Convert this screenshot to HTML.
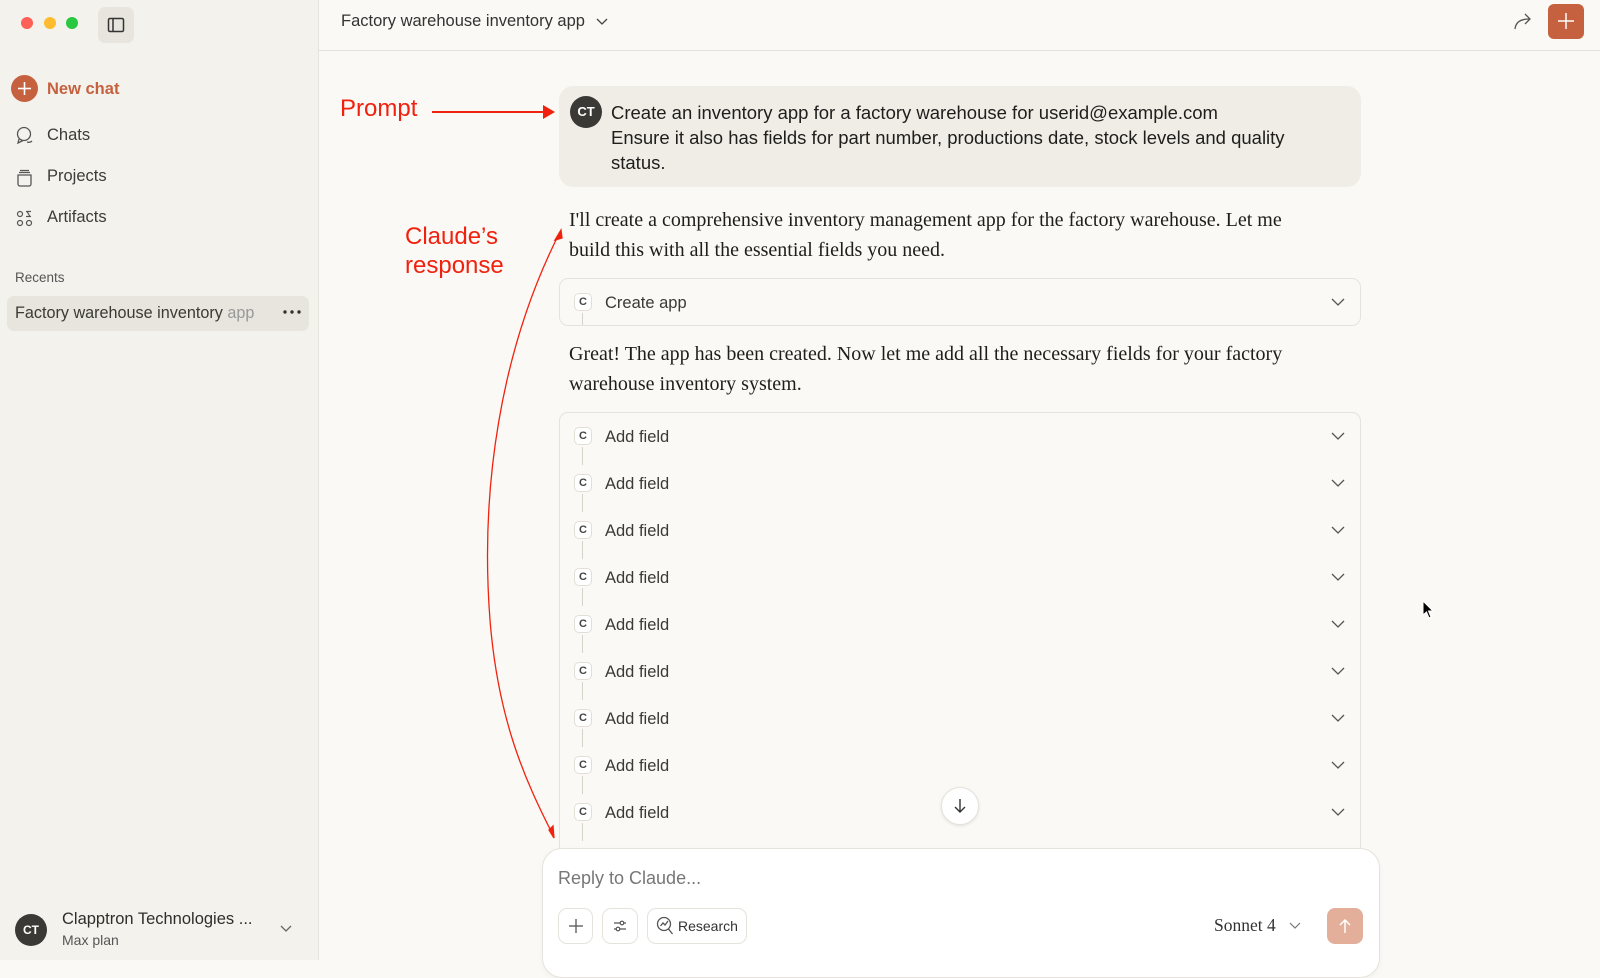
<!DOCTYPE html>
<html><head><style>
*{margin:0;padding:0;box-sizing:border-box}
body{width:1600px;height:960px;overflow:hidden;background:#faf9f5;font-family:"Liberation Sans",sans-serif;color:#2b2a27;position:relative}
.a{position:absolute}
.side{left:0;top:0;width:319px;height:960px;background:#f4f2ec;border-right:1px solid #e6e3dc}
.nav{font-size:16.5px;color:#3d3c38}
.serif{font-family:"Liberation Serif",serif}
.row{position:absolute;left:560px;width:801px;height:47px}
.cicon{position:absolute;left:14px;top:15px;width:18px;height:18px;border:1px solid #e2dfd7;border-radius:5px;background:#fff;font-size:11px;font-weight:bold;text-align:center;line-height:16px;color:#444}
.vline{position:absolute;left:22px;top:35px;width:1px;height:18px;background:#d6d3cb}
.lbl{position:absolute;left:45px;top:16px;font-size:16.5px;color:#3a3935}
.chev{position:absolute;right:16px;top:19px}
.btn{position:absolute;top:908px;height:36px;border:1px solid #e6e3dc;border-radius:9px;background:#fff}
</style></head><body>
<div class="a side">
  <div class="a" style="left:21px;top:17px;width:12px;height:12px;border-radius:50%;background:#fe5f57"></div>
  <div class="a" style="left:44px;top:17px;width:12px;height:12px;border-radius:50%;background:#febc2e"></div>
  <div class="a" style="left:66px;top:17px;width:12px;height:12px;border-radius:50%;background:#28c840"></div>
  <div class="a" style="left:98px;top:7px;width:36px;height:36px;border-radius:7px;background:#e8e5de"></div>
  <svg class="a" style="left:106px;top:15px" width="20" height="20" viewBox="0 0 20 20" fill="none" stroke="#333" stroke-width="1.5"><rect x="2.5" y="3.5" width="15" height="13" rx="1.5"/><line x1="7" y1="4" x2="7" y2="16"/></svg>
  <div class="a" style="left:11px;top:75px;width:27px;height:27px;border-radius:50%;background:#c6613f"></div>
  <svg class="a" style="left:17px;top:81px" width="15" height="15" stroke="#fff" stroke-width="1.6"><line x1="7.5" y1="1" x2="7.5" y2="14"/><line x1="1" y1="7.5" x2="14" y2="7.5"/></svg>
  <div class="a" style="left:47px;top:80px;font-size:16.5px;font-weight:bold;color:#c6613f">New chat</div>
  <svg class="a" style="left:15px;top:126px" width="20" height="20" fill="none" stroke="#555" stroke-width="1.3"><circle cx="9" cy="8" r="6.5"/><path d="M4 13 L3 17 L8 14.5 M12 16 Q15 17 17 15"/></svg>
  <div class="a nav" style="left:47px;top:126px">Chats</div>
  <svg class="a" style="left:15px;top:168px" width="20" height="20" fill="none" stroke="#555" stroke-width="1.3"><path d="M3 7h13v9a2 2 0 0 1-2 2H5a2 2 0 0 1-2-2z M4 4.5h11 M5 2.5h9"/></svg>
  <div class="a nav" style="left:47px;top:167px">Projects</div>
  <svg class="a" style="left:15px;top:209px" width="20" height="20" fill="none" stroke="#555" stroke-width="1.2"><circle cx="5" cy="5" r="2.5"/><path d="M11 2.5h5M11 7.5h5M12 2.5 L15 7.5"/><circle cx="5" cy="14" r="2.5"/><circle cx="14" cy="14" r="2.5"/></svg>
  <div class="a nav" style="left:47px;top:208px">Artifacts</div>
  <div class="a" style="left:15px;top:270px;font-size:13.5px;color:#555">Recents</div>
  <div class="a" style="left:7px;top:296px;width:302px;height:35px;border-radius:7px;background:#e8e5de"></div>
  <div class="a" style="left:15px;top:304px;font-size:16.2px;color:#3a3935;white-space:nowrap;width:246px;overflow:hidden">Factory warehouse inventory <span style="color:#999">app</span></div>
  <svg class="a" style="left:283px;top:310px" width="18" height="4" fill="#333"><circle cx="2" cy="2" r="1.7"/><circle cx="9" cy="2" r="1.7"/><circle cx="16" cy="2" r="1.7"/></svg>
  <div class="a" style="left:15px;top:914px;width:32px;height:32px;border-radius:50%;background:#3a3935;color:#fff;font-size:12px;font-weight:bold;text-align:center;line-height:32px">CT</div>
  <div class="a" style="left:62px;top:910px;font-size:16.5px;color:#2f2e2b">Clapptron Technologies ...</div>
  <div class="a" style="left:62px;top:932px;font-size:14px;color:#555">Max plan</div>
  <svg class="a" style="left:279px;top:924px" width="14" height="10" fill="none" stroke="#666" stroke-width="1.3"><path d="M2 2l5 5 5-5"/></svg>
</div>
<div class="a" style="left:319px;top:50px;width:1281px;height:1px;background:#e6e3dc"></div>
<div class="a" style="left:341px;top:12px;font-size:16.5px;color:#333">Factory warehouse inventory app</div>
<svg class="a" style="left:596px;top:17px" width="12" height="10" fill="none" stroke="#444" stroke-width="1.3"><path d="M1 2l5 5 5-5"/></svg>
<svg class="a" style="left:1511px;top:10px" width="24" height="22" fill="none" stroke="#555" stroke-width="1.3"><path d="M4 19 Q5 9 18 9 M14 4 L19 9 L14 14"/></svg>
<div class="a" style="left:1548px;top:4px;width:36px;height:35px;border-radius:6px;background:#c6613f"></div>
<svg class="a" style="left:1557px;top:12px" width="18" height="18" stroke="#fff" stroke-width="1.5"><line x1="9" y1="1" x2="9" y2="17"/><line x1="1" y1="9" x2="17" y2="9"/></svg>

<div class="a" style="left:559px;top:86px;width:802px;height:101px;border-radius:14px;background:#f0ede6"></div>
<div class="a" style="left:570px;top:96px;width:32px;height:32px;border-radius:50%;background:#3a3935;color:#fff;font-size:13px;font-weight:bold;text-align:center;line-height:32px">CT</div>
<div class="a" style="left:611px;top:100px;font-size:18.5px;line-height:25px;color:#1f1e1c;width:700px">Create an inventory app for a factory warehouse for userid@example.com<br>Ensure it also has fields for part number, productions date, stock levels and quality status.</div>

<div class="a serif" style="left:569px;top:205px;font-size:20px;line-height:30px;color:#1f1e1c;width:745px">I'll create a comprehensive inventory management app for the factory warehouse. Let me build this with all the essential fields you need.</div>
<div class="a" style="left:559px;top:278px;width:802px;height:48px;border:1px solid #e6e3dc;border-radius:9px"></div>
<div class="row" style="top:278px"><div class="cicon">C</div><div class="vline" style="height:12px"></div><div class="lbl">Create app</div><svg class="chev" width="14" height="10" fill="none" stroke="#555" stroke-width="1.3"><path d="M1 2l6 6 6-6"/></svg></div>
<div class="a serif" style="left:569px;top:339px;font-size:20px;line-height:30px;color:#1f1e1c;width:745px">Great! The app has been created. Now let me add all the necessary fields for your factory warehouse inventory system.</div>
<div class="a" style="left:559px;top:412px;width:802px;height:460px;border:1px solid #e6e3dc;border-radius:9px"></div>
<div class="row" style="top:412px"><div class="cicon">C</div><div class="vline"></div><div class="lbl">Add field</div><svg class="chev" width="14" height="10" fill="none" stroke="#555" stroke-width="1.3"><path d="M1 2l6 6 6-6"/></svg></div>
<div class="row" style="top:459px"><div class="cicon">C</div><div class="vline"></div><div class="lbl">Add field</div><svg class="chev" width="14" height="10" fill="none" stroke="#555" stroke-width="1.3"><path d="M1 2l6 6 6-6"/></svg></div>
<div class="row" style="top:506px"><div class="cicon">C</div><div class="vline"></div><div class="lbl">Add field</div><svg class="chev" width="14" height="10" fill="none" stroke="#555" stroke-width="1.3"><path d="M1 2l6 6 6-6"/></svg></div>
<div class="row" style="top:553px"><div class="cicon">C</div><div class="vline"></div><div class="lbl">Add field</div><svg class="chev" width="14" height="10" fill="none" stroke="#555" stroke-width="1.3"><path d="M1 2l6 6 6-6"/></svg></div>
<div class="row" style="top:600px"><div class="cicon">C</div><div class="vline"></div><div class="lbl">Add field</div><svg class="chev" width="14" height="10" fill="none" stroke="#555" stroke-width="1.3"><path d="M1 2l6 6 6-6"/></svg></div>
<div class="row" style="top:647px"><div class="cicon">C</div><div class="vline"></div><div class="lbl">Add field</div><svg class="chev" width="14" height="10" fill="none" stroke="#555" stroke-width="1.3"><path d="M1 2l6 6 6-6"/></svg></div>
<div class="row" style="top:694px"><div class="cicon">C</div><div class="vline"></div><div class="lbl">Add field</div><svg class="chev" width="14" height="10" fill="none" stroke="#555" stroke-width="1.3"><path d="M1 2l6 6 6-6"/></svg></div>
<div class="row" style="top:741px"><div class="cicon">C</div><div class="vline"></div><div class="lbl">Add field</div><svg class="chev" width="14" height="10" fill="none" stroke="#555" stroke-width="1.3"><path d="M1 2l6 6 6-6"/></svg></div>
<div class="row" style="top:788px"><div class="cicon">C</div><div class="vline"></div><div class="lbl">Add field</div><svg class="chev" width="14" height="10" fill="none" stroke="#555" stroke-width="1.3"><path d="M1 2l6 6 6-6"/></svg></div>

<div class="a" style="left:941px;top:787px;width:38px;height:38px;border-radius:50%;background:#fff;border:1px solid #e6e3dc;box-shadow:0 1px 3px rgba(0,0,0,.1)"></div>
<svg class="a" style="left:952px;top:797px" width="16" height="18" fill="none" stroke="#333" stroke-width="1.4"><path d="M8 2v13 M3 10l5 5 5-5"/></svg>

<div class="a" style="left:542px;top:848px;width:838px;height:130px;border-radius:20px;background:#fff;border:1px solid #e6e3dc;box-shadow:0 2px 6px rgba(0,0,0,.04)"></div>
<div class="a" style="left:558px;top:868px;font-size:18px;color:#777">Reply to Claude...</div>
<div class="btn" style="left:558px;width:35px"></div>
<svg class="a" style="left:568px;top:918px" width="16" height="16" stroke="#555" stroke-width="1.3"><line x1="8" y1="1" x2="8" y2="15"/><line x1="1" y1="8" x2="15" y2="8"/></svg>
<div class="btn" style="left:602px;width:36px"></div>
<svg class="a" style="left:612px;top:918px" width="16" height="16" fill="none" stroke="#555" stroke-width="1.2"><path d="M2 5h12 M2 11h12"/><circle cx="10" cy="5" r="1.8" fill="#fff"/><circle cx="6" cy="11" r="1.8" fill="#fff"/></svg>
<div class="btn" style="left:647px;width:100px"></div>
<svg class="a" style="left:655px;top:916px" width="20" height="20" fill="none" stroke="#555" stroke-width="1.3"><circle cx="9" cy="8" r="6.5"/><path d="M13.5 13l4 5 M5.5 10l2.5-3 2 2 3-4"/></svg>
<div class="a" style="left:678px;top:918px;font-size:14px;color:#333">Research</div>
<div class="a serif" style="left:1214px;top:915px;font-size:17.5px;color:#333">Sonnet 4</div>
<svg class="a" style="left:1289px;top:921px" width="12" height="9" fill="none" stroke="#777" stroke-width="1.2"><path d="M1 2l5 5 5-5"/></svg>
<div class="a" style="left:1327px;top:908px;width:36px;height:36px;border-radius:8px;background:#e3ae9a"></div>
<svg class="a" style="left:1337px;top:917px" width="16" height="18" fill="none" stroke="#fff" stroke-width="1.5"><path d="M8 16V3 M3 8l5-5 5 5"/></svg>

<div class="a" style="left:340px;top:95px;font-size:24px;color:#f0220f">Prompt</div>
<div class="a" style="left:432px;top:111px;width:113px;height:2px;background:#f0220f"></div>
<svg class="a" style="left:543px;top:105px" width="12" height="14"><path d="M0 0L12 7L0 14z" fill="#f0220f"/></svg>
<div class="a" style="left:405px;top:222px;font-size:24px;line-height:29px;color:#f0220f">Claude’s<br>response</div>
<svg class="a" style="left:470px;top:220px" width="100" height="630" fill="none" stroke="#f0220f" stroke-width="1.3"><path d="M90 12 C30 130 10 270 20 400 C28 500 55 560 83 615"/><path d="M91 10 L85 20 L92 18z M84 618 L83 606 L79 610z" fill="#f0220f"/></svg>

<svg class="a" style="left:1422px;top:600px" width="14" height="20"><path d="M1 1 L1 15 L4.5 12 L7 18 L9 17 L6.5 11 L11 11 z" fill="#000" stroke="#fff" stroke-width="1"/></svg>
</body></html>
